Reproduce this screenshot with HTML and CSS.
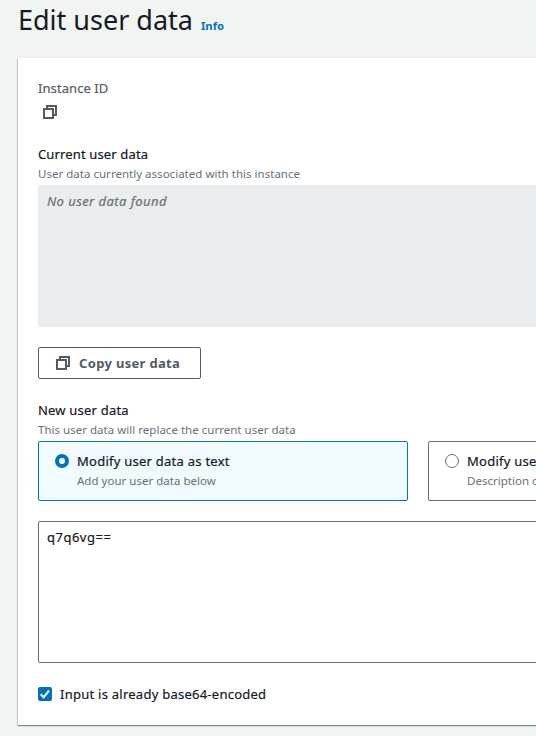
FILE: index.html
```html
<!DOCTYPE html>
<html lang="en">
<head>
<meta charset="utf-8">
<title>Edit user data</title>
<link rel="stylesheet" href="styles.css">
</head>
<body>
<header class="page-header">
  <h1>Edit user data</h1>
  <a class="info">Info</a>
</header>
<main class="panel">
  <div class="label muted"><span class="t-instance">Instance ID</span></div>
  <div class="copy-row">
    <svg class="copy" viewBox="0 0 14 14"><path d="M1 4h9v9H1zM4 4V1h9v9h-3"/></svg>
  </div>
  <div class="label"><span class="t-current">Current user data</span></div>
  <div class="hint"><span class="t-hint">User data currently associated with this instance</span></div>
  <div class="box readonly"><span class="t-none">No user data found</span></div>
  <button class="copy-button">
    <svg class="copy" viewBox="0 0 14 14"><path d="M1 4h9v9H1zM4 4V1h9v9h-3"/></svg>
    <span>Copy user data</span>
  </button>
  <div class="label"><span class="t-new">New user data</span></div>
  <div class="hint"><span class="t-hint">This user data will replace the current user data</span></div>
  <div class="tiles">
    <div class="tile selected">
      <span class="radio"></span>
      <div>
        <div class="label"><span class="t-modify">Modify user data as text</span></div>
        <div class="hint"><span class="t-hint">Add your user data below</span></div>
      </div>
    </div>
    <div class="tile">
      <span class="radio"></span>
      <div>
        <div class="label"><span class="t-modify">Modify user data</span></div>
        <div class="hint"><span class="t-hint">Description of file</span></div>
      </div>
    </div>
  </div>
  <div class="box editor"><span class="t-code">q7q6vg==</span></div>
  <div class="check-row">
    <svg class="check" viewBox="0 0 14 14"><rect width="14" height="14" rx="2"/><path d="M2.7 7.2l3 3 5.3-6.6"/></svg>
    <span class="t-input">Input is already base64-encoded</span>
  </div>
</main>
</body>
</html>
```
FILE: styles.css
```css
* { box-sizing: border-box; }
body {
  margin: 0;
  height: 736px;
  overflow: hidden;
  background: #f2f3f3;
  color: #16191f;
  font: 13px/22px "Noto Sans", sans-serif;
  white-space: nowrap;
}
.page-header {
  display: flex;
  align-items: baseline;
  gap: 8px;
  height: 58px;
  padding: 2px 0 0 18px;
}
h1 { margin: 0; font-size: 27px; line-height: 36px; font-weight: 400; }
.info { color: #0073bb; font-size: 11.2px; font-weight: 700; }
.panel {
  width: 820px;
  height: 667px;
  margin-left: 18px;
  padding: 19px 20px;
  background: #fff;
  box-shadow: 0 -1px 0 #eaeded, 0 1px 1px rgba(0, 28, 36, .3), 1px 1px 1px rgba(0, 28, 36, .15), -1px 1px 1px rgba(0, 28, 36, .15);
}
.label { height: 22px; -webkit-text-stroke: .2px currentColor; }
.muted { color: #545b64; }
.hint { height: 20px; color: #687078; font-size: 11.5px; line-height: 18px; }
.t-instance { letter-spacing: .08px; }
.t-current { letter-spacing: .14px; }
.t-hint { letter-spacing: .02px; }
.t-none { letter-spacing: .43px; }
.t-new { letter-spacing: .2px; }
.t-modify { letter-spacing: .25px; }
.t-code { letter-spacing: .5px; }
.t-input { letter-spacing: .25px; }
.copy-row { display: flex; align-items: center; height: 26px; margin-bottom: 18px; padding-left: 5px; }
.copy { flex: none; width: 14px; height: 14px; fill: none; stroke: #545b64; stroke-width: 2; }
.box { height: 142px; padding: 5px 9px; -webkit-text-stroke: .2px currentColor; }
.readonly { background: #eaeded; color: #687078; font-style: italic; }
.copy-button {
  display: flex;
  align-items: center;
  gap: 9px;
  width: 163px;
  height: 32px;
  margin: 20px 0;
  padding: 0 17px;
  border: 1px solid #545b64;
  border-radius: 2px;
  background: #fff;
  color: #545b64;
  font: 700 13px/22px "Noto Sans", sans-serif;
  letter-spacing: .33px;
}
.tiles { display: grid; grid-template-columns: 370px 370px; gap: 20px; }
.tile { display: flex; gap: 8px; height: 60px; padding: 8px 16px; border: 1px solid #687078; border-radius: 2px; }
.selected { border-color: #0073bb; background: #f1faff; }
.radio { flex: none; width: 14px; height: 14px; margin-top: 4px; border: 1px solid #687078; border-radius: 50%; background: #fff; }
.selected .radio { border: 4px solid #0073bb; }
.editor { margin-top: 20px; padding: 4px 8px; border: 1px solid #687078; border-radius: 2px; }
.check-row { display: flex; align-items: center; gap: 8px; height: 22px; margin-top: 20px; -webkit-text-stroke: .2px currentColor; }
.check { flex: none; width: 14px; height: 14px; fill: #0073bb; }
.check path { fill: none; stroke: #fff; stroke-width: 2; }
```
